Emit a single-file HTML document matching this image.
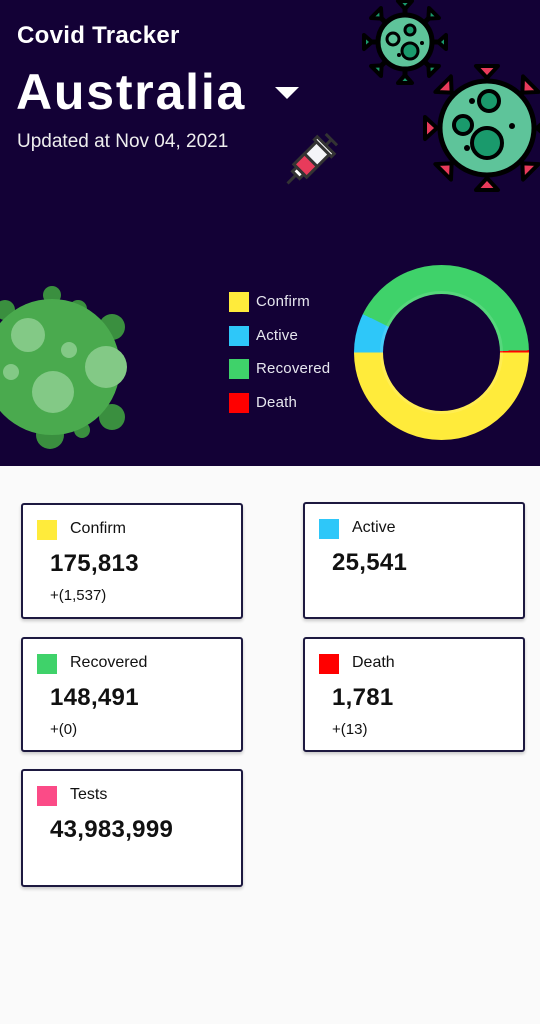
<!DOCTYPE html>
<html><head><meta charset="utf-8"><style>
*{margin:0;padding:0;box-sizing:border-box}
body{width:540px;height:1024px;background:#fafafa;font-family:"Liberation Sans",sans-serif;position:relative;overflow:hidden}
.hdr{position:absolute;left:0;top:0;width:540px;height:466px;background:#130136;overflow:hidden}
.t1{position:absolute;left:17px;top:22px;color:#fff;font-weight:bold;font-size:24px;letter-spacing:0.3px}
.t2{position:absolute;left:16px;top:63px;color:#fff;font-weight:bold;font-size:50px;letter-spacing:1.8px}
.tri{position:absolute;left:275px;top:87px;width:0;height:0;border-left:12px solid transparent;border-right:12px solid transparent;border-top:12px solid #fff}
.t3{position:absolute;left:17px;top:131px;color:#eee;font-size:19px}
.leg{position:absolute;left:229px;color:#e6e6ee;font-size:15px}
.leg i{position:absolute;left:0;top:0;width:20px;height:20px}
.leg span{position:absolute;left:27px;top:1px;white-space:nowrap;letter-spacing:0.2px}
.donut{position:absolute;left:354px;top:265px;width:175px;height:175px;border-radius:50%;background:conic-gradient(from 90deg,#ffeb3b 0 180deg,#2ec7f9 180deg 206deg,#3fd26a 206deg 358.5deg,#f00 358.5deg 360deg)}
.donut::after{content:"";position:absolute;left:29px;top:29px;width:117px;height:117px;border-radius:50%;background:#130136;box-shadow:0 0 0 3px rgba(255,255,255,.12)}
.card{position:absolute;width:222px;background:#fff;border:2px solid #1d1940;border-radius:3px;box-shadow:0 2px 3px rgba(0,0,0,.2)}
.card i{position:absolute;left:14px;top:15px;width:20px;height:20px}
.card .l{position:absolute;left:47px;top:15px;font-size:16px;color:#111}
.card .n{position:absolute;left:27px;top:45px;font-size:24px;font-weight:bold;color:#111;letter-spacing:0.3px}
.card .d{position:absolute;left:27px;top:82px;font-size:15px;color:#111}
</style></head><body>
<div class="hdr">
<div class="t1">Covid Tracker</div>
<div class="t2">Australia</div>
<div class="tri"></div>
<div class="t3">Updated at Nov 04, 2021</div>
<svg style="position:absolute;left:0;top:0" width="540" height="200" viewBox="0 0 540 200">
<defs>
<g id="sp1"><line x1="0" y1="-26" x2="0" y2="-36" stroke="#000" stroke-width="5"/><path d="M-7 -41 L7 -41 L0 -33 Z" fill="#1a9a6c" stroke="#000" stroke-width="4" stroke-linejoin="round"/></g>
<g id="sp2"><line x1="0" y1="-44" x2="0" y2="-54" stroke="#000" stroke-width="5"/><path d="M-11 -62 L11 -62 L0 -50 Z" fill="#e83b5b" stroke="#000" stroke-width="4" stroke-linejoin="round"/></g>
</defs>
<g transform="translate(405,42)">
<use href="#sp1"/><use href="#sp1" transform="rotate(45)"/><use href="#sp1" transform="rotate(90)"/><use href="#sp1" transform="rotate(135)"/><use href="#sp1" transform="rotate(180)"/><use href="#sp1" transform="rotate(225)"/><use href="#sp1" transform="rotate(270)"/><use href="#sp1" transform="rotate(315)"/>
<circle r="27" fill="#5ec49a" stroke="#000" stroke-width="5"/>
<circle cx="-12" cy="-3" r="6" fill="#5ec49a" stroke="#000" stroke-width="3"/><circle cx="5" cy="-12" r="5" fill="#1a9a6c" stroke="#000" stroke-width="3"/><circle cx="5" cy="9" r="8" fill="#1a9a6c" stroke="#000" stroke-width="3"/>
<circle cx="17" cy="1" r="2"/><circle cx="-6" cy="13" r="2"/>
</g>
<g transform="translate(487,128)">
<use href="#sp2"/><use href="#sp2" transform="rotate(45)"/><use href="#sp2" transform="rotate(90)"/><use href="#sp2" transform="rotate(135)"/><use href="#sp2" transform="rotate(180)"/><use href="#sp2" transform="rotate(225)"/><use href="#sp2" transform="rotate(270)"/><use href="#sp2" transform="rotate(315)"/>
<circle r="47" fill="#5ec49a" stroke="#000" stroke-width="5"/>
<circle cx="-24" cy="-3" r="9" fill="#1a9a6c" stroke="#000" stroke-width="4"/><circle cx="2" cy="-27" r="10" fill="#1a9a6c" stroke="#000" stroke-width="4"/><circle cx="0" cy="15" r="15" fill="#1a9a6c" stroke="#000" stroke-width="4"/>
<circle cx="-20" cy="20" r="3"/><circle cx="25" cy="-2" r="3"/><circle cx="-15" cy="-27" r="3"/>
</g>
<g transform="translate(313,158) rotate(-45)" stroke="#333" stroke-width="3">
<line x1="-36" y1="0" x2="-24" y2="0"/>
<rect x="-24" y="-5" width="6" height="10" fill="#fff"/>
<rect x="-18" y="-9" width="32" height="18" fill="#f4f4f8"/>
<rect x="-18" y="-9" width="15" height="18" fill="#e83b5b"/>
<rect x="14" y="-12" width="4" height="24" fill="#fff"/>
<line x1="18" y1="0" x2="26" y2="0"/><line x1="26" y1="-8" x2="26" y2="8"/>
</g>
</svg>
<svg style="position:absolute;left:0;top:285px" width="130" height="170" viewBox="0 0 130 170">
<g fill="#3a8f3f">
<circle cx="52" cy="10" r="9"/><circle cx="78" cy="24" r="9"/><circle cx="112" cy="42" r="13"/><circle cx="112" cy="132" r="13"/><circle cx="50" cy="150" r="14"/><circle cx="82" cy="145" r="8"/><circle cx="5" cy="25" r="10"/>
</g>
<circle cx="52" cy="82" r="68" fill="#4aaa4e"/>
<g fill="#83c986"><circle cx="28" cy="50" r="17"/><circle cx="69" cy="65" r="8"/><circle cx="106" cy="82" r="21"/><circle cx="11" cy="87" r="8"/><circle cx="53" cy="107" r="21"/></g>
</svg>
<div class="leg" style="top:292px"><i style="background:#ffeb3b"></i><span>Confirm</span></div>
<div class="leg" style="top:326px"><i style="background:#2ec7f9"></i><span>Active</span></div>
<div class="leg" style="top:359px"><i style="background:#3fd26a"></i><span>Recovered</span></div>
<div class="leg" style="top:393px"><i style="background:#f00"></i><span>Death</span></div>
<div class="donut"></div>
</div>
<div class="card" style="left:21px;top:503px;height:116px"><i style="background:#ffeb3b"></i><div class="l">Confirm</div><div class="n">175,813</div><div class="d">+(1,537)</div></div>
<div class="card" style="left:303px;top:502px;height:117px"><i style="background:#2ec7f9"></i><div class="l">Active</div><div class="n">25,541</div></div>
<div class="card" style="left:21px;top:637px;height:115px"><i style="background:#3fd26a"></i><div class="l">Recovered</div><div class="n">148,491</div><div class="d">+(0)</div></div>
<div class="card" style="left:303px;top:637px;height:115px"><i style="background:#f00"></i><div class="l">Death</div><div class="n">1,781</div><div class="d">+(13)</div></div>
<div class="card" style="left:21px;top:769px;height:118px"><i style="background:#fb4b87"></i><div class="l">Tests</div><div class="n">43,983,999</div></div>
</body></html>
